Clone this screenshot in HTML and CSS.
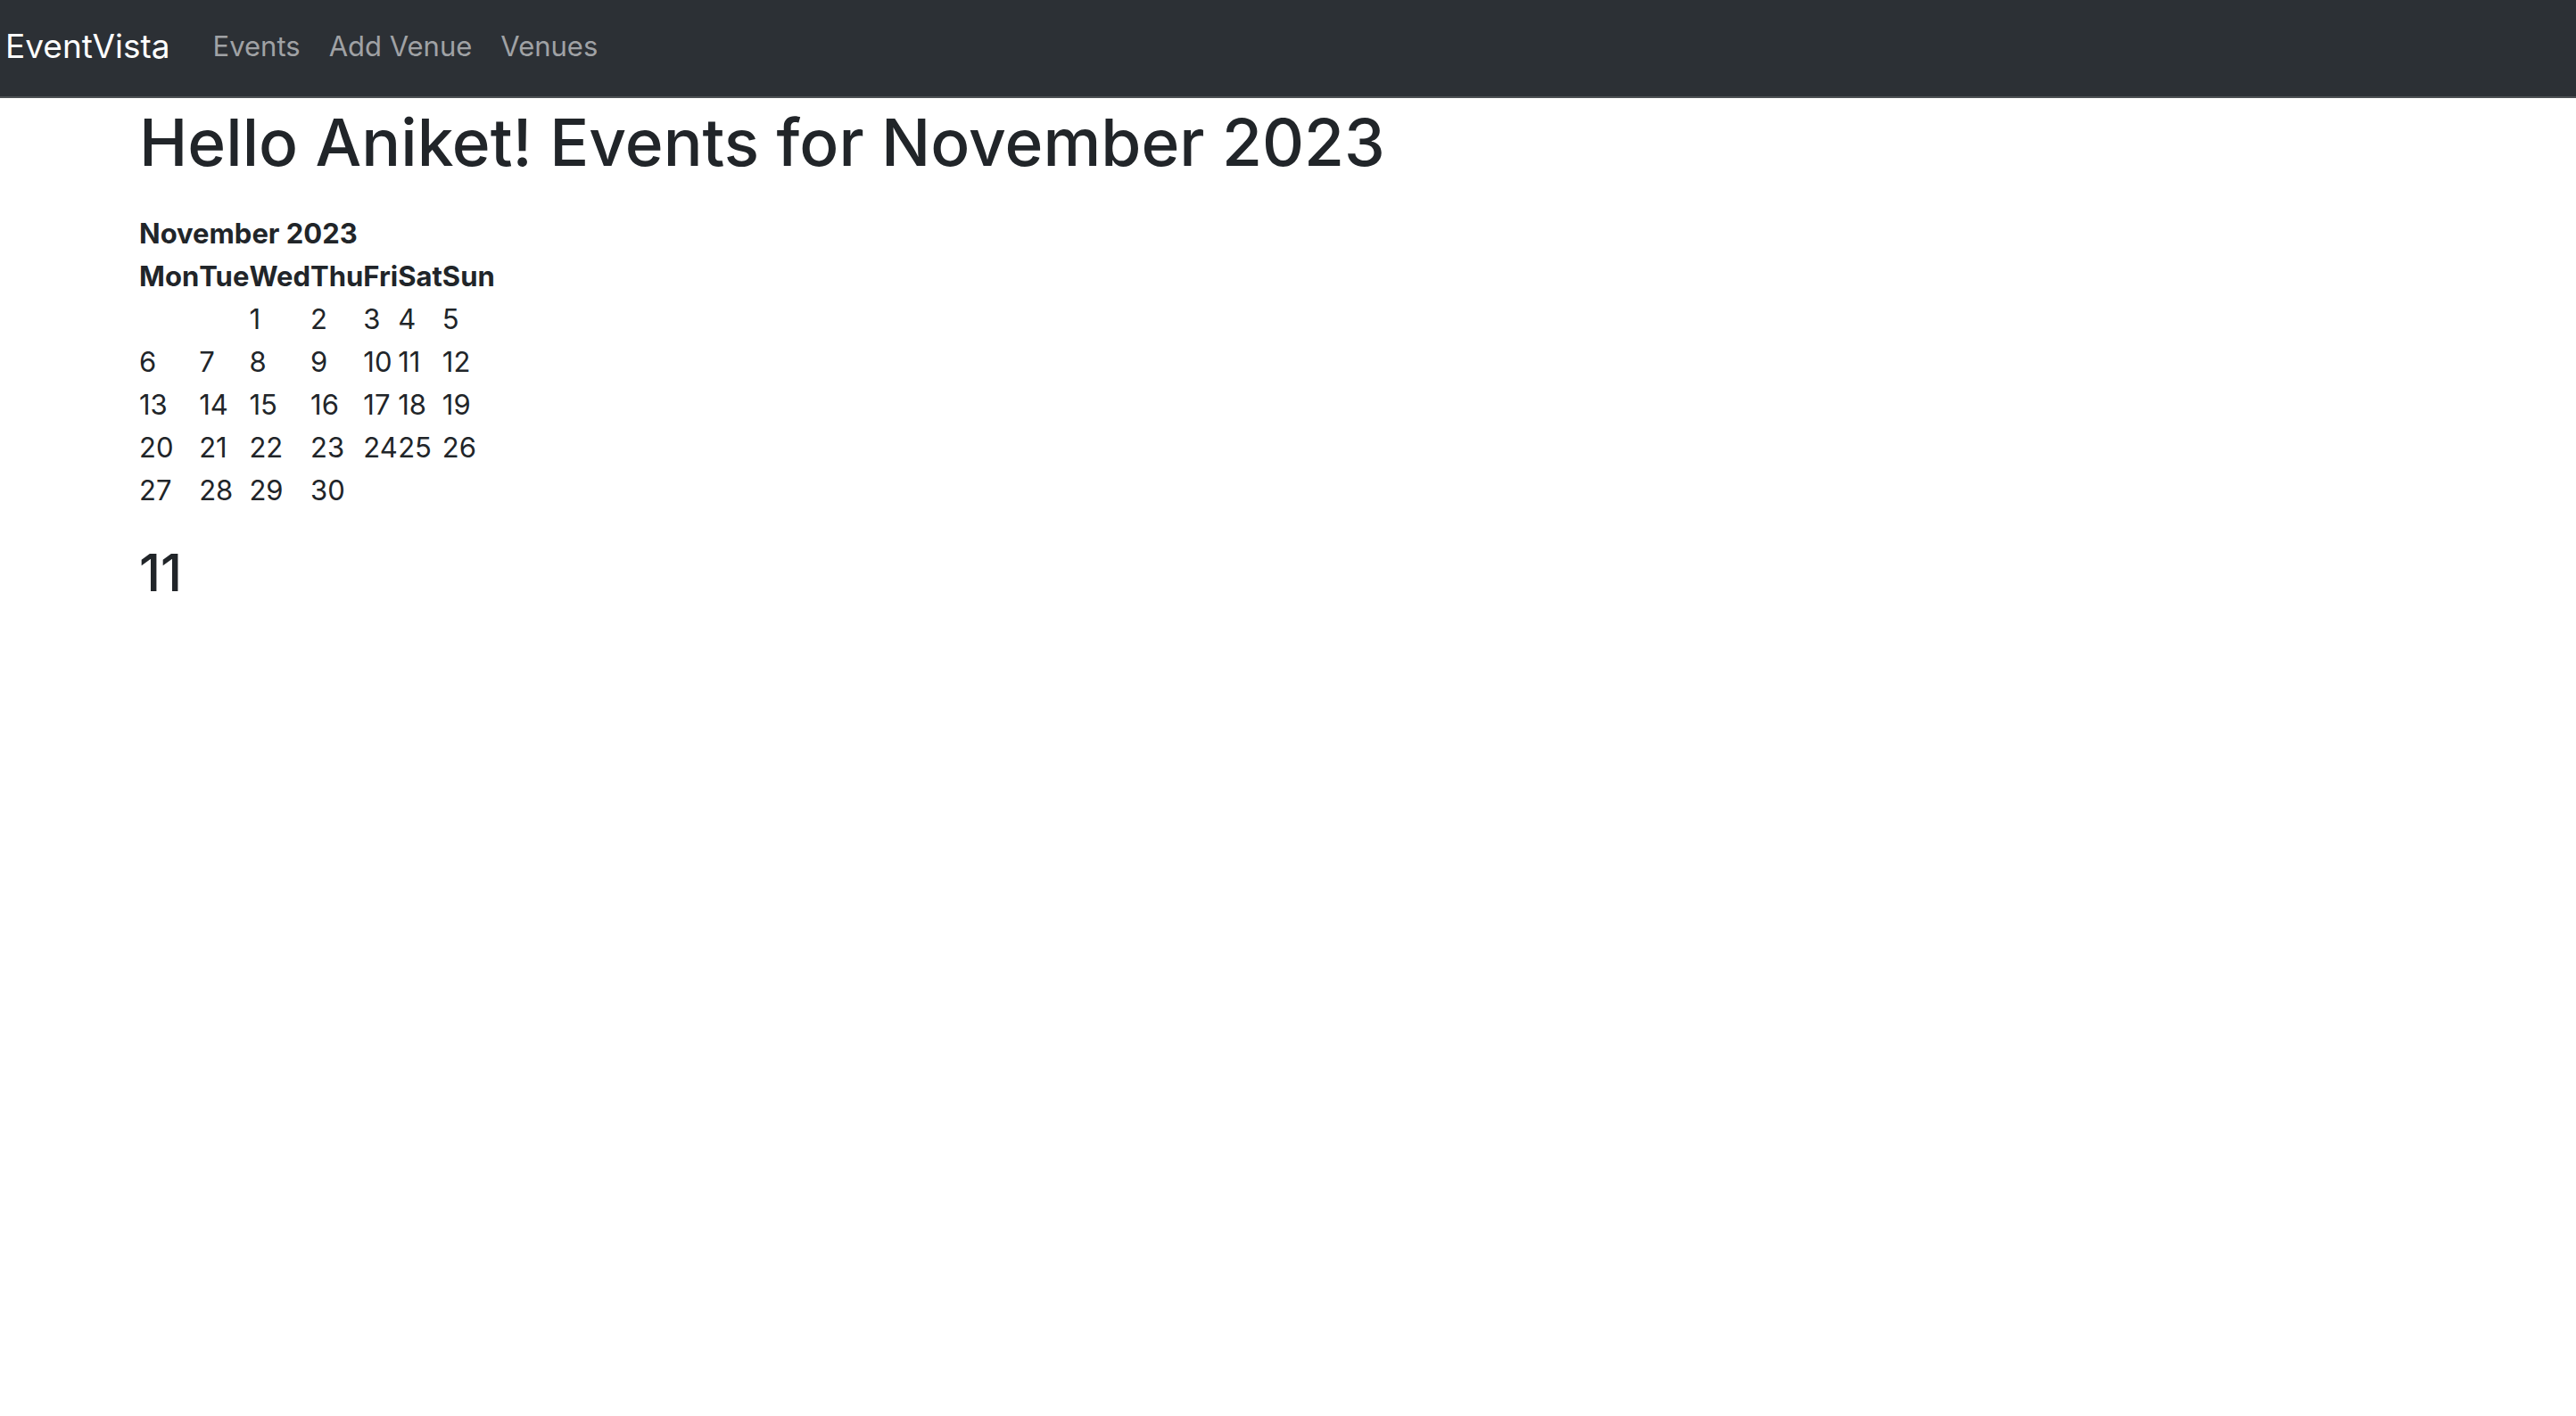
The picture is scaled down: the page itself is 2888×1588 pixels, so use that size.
FILE: index.html
```html
<!DOCTYPE html>
<html lang="en">
<head>
<meta charset="utf-8">
<title>EventVista</title>
<link rel="stylesheet" href="styles.css">
</head>
<body>
<nav class="navbar">
  <a class="brand" href="#">EventVista</a>
  <ul class="nav-links">
    <li><a href="#">Events</a></li>
    <li><a href="#">Add Venue</a></li>
    <li><a href="#">Venues</a></li>
  </ul>
</nav>
<main class="container">
  <h1 class="title">Hello Aniket! Events for November 2023</h1>
  <table class="month">
    <thead>
      <tr><th colspan="7">November 2023</th></tr>
      <tr><th>Mon</th><th>Tue</th><th>Wed</th><th>Thu</th><th>Fri</th><th>Sat</th><th>Sun</th></tr>
    </thead>
    <tbody>
      <tr><td></td><td></td><td>1</td><td>2</td><td>3</td><td>4</td><td>5</td></tr>
      <tr><td>6</td><td>7</td><td>8</td><td>9</td><td>10</td><td>11</td><td>12</td></tr>
      <tr><td>13</td><td>14</td><td>15</td><td>16</td><td>17</td><td>18</td><td>19</td></tr>
      <tr><td>20</td><td>21</td><td>22</td><td>23</td><td>24</td><td>25</td><td>26</td></tr>
      <tr><td>27</td><td>28</td><td>29</td><td>30</td><td></td><td></td><td></td></tr>
    </tbody>
  </table>
  <h2 class="count">11</h2>
</main>
</body>
</html>
```
FILE: styles.css
```css
* {
  box-sizing: border-box;
}

body {
  margin: 0;
  background: #fff;
  color: #212529;
  font: 400 31px/48px Inter, "Liberation Sans", sans-serif;
}

.navbar {
  display: flex;
  align-items: center;
  gap: 32px;
  padding: 14px 6px 18px;
  background: #2c3035;
  border-bottom: 2px solid #4d5154;
}

.brand {
  padding: 8px 0;
  color: #fff;
  font-size: 37px;
  line-height: 60px;
  text-decoration: none;
}

.nav-links {
  display: flex;
  margin: 0;
  padding: 0;
  list-style: none;
}

.nav-links a {
  display: block;
  padding: 12px 16px;
  color: #a0a2a5;
  text-decoration: none;
}

.container {
  padding: 0 156px;
}

.title {
  margin: 0 0 28px;
  font-size: 73px;
  font-weight: 500;
  line-height: 100px;
}

.month {
  border-collapse: collapse;
}

.month th,
.month td {
  padding: 0;
  text-align: left;
}

.month th {
  font-weight: 700;
}

.count {
  margin: 32px 0;
  font-size: 58px;
  font-weight: 500;
  line-height: 72px;
}
```
